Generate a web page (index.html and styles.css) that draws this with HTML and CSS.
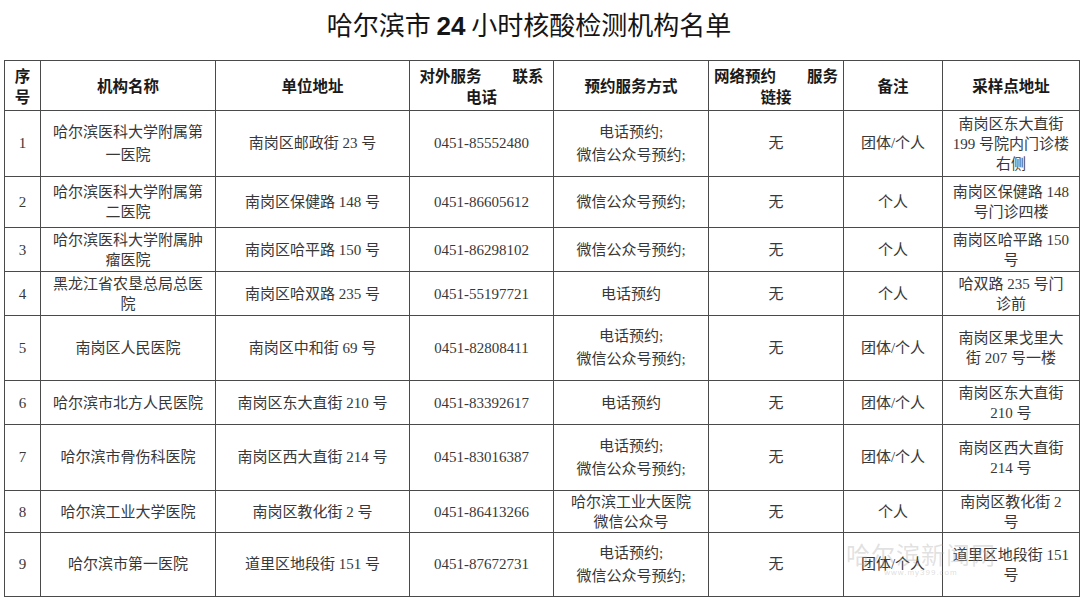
FILE: index.html
```html
<!DOCTYPE html>
<html lang="zh-CN">
<head>
<meta charset="utf-8">
<title>哈尔滨市24小时核酸检测机构名单</title>
<link rel="stylesheet" href="styles.css">
</head>
<body>
<div class="page">
  <h1 class="title">哈尔滨市 <b class="num">24</b> 小时核酸检测机构名单</h1>
  <table class="list">
    <colgroup>
      <col class="c-no"><col class="c-name"><col class="c-addr"><col class="c-tel">
      <col class="c-way"><col class="c-link"><col class="c-note"><col class="c-site">
    </colgroup>
    <thead>
      <tr class="h-head">
        <th>序<br>号</th>
        <th>机构名称</th>
        <th>单位地址</th>
        <th>对外服务　　联系<br>电话</th>
        <th>预约服务方式</th>
        <th>网络预约　　服务<br>链接</th>
        <th>备注</th>
        <th>采样点地址</th>
      </tr>
    </thead>
    <tbody>
      <tr class="h66 tall">
        <td>1</td><td>哈尔滨医科大学附属第<br>一医院</td><td>南岗区邮政街 23 号</td><td>0451-85552480</td>
        <td>电话预约;<br>微信公众号预约;</td><td>无</td><td>团体/个人</td><td class="site">南岗区东大直街<br>199 号院内门诊楼<br>右侧</td>
      </tr>
      <tr class="h51">
        <td>2</td><td>哈尔滨医科大学附属第<br>二医院</td><td>南岗区保健路 148 号</td><td>0451-86605612</td>
        <td>微信公众号预约;</td><td>无</td><td>个人</td><td class="site">南岗区保健路 148<br>号门诊四楼</td>
      </tr>
      <tr class="h44">
        <td>3</td><td>哈尔滨医科大学附属肿<br>瘤医院</td><td>南岗区哈平路 150 号</td><td>0451-86298102</td>
        <td>微信公众号预约;</td><td>无</td><td>个人</td><td class="site">南岗区哈平路 150<br>号</td>
      </tr>
      <tr class="h44">
        <td>4</td><td>黑龙江省农垦总局总医<br>院</td><td>南岗区哈双路 235 号</td><td>0451-55197721</td>
        <td>电话预约</td><td>无</td><td>个人</td><td class="site">哈双路 235 号门<br>诊前</td>
      </tr>
      <tr class="h65 tall">
        <td>5</td><td>南岗区人民医院</td><td>南岗区中和街 69 号</td><td>0451-82808411</td>
        <td>电话预约;<br>微信公众号预约;</td><td>无</td><td>团体/个人</td><td class="site">南岗区果戈里大<br>街 207 号一楼</td>
      </tr>
      <tr class="h44">
        <td>6</td><td>哈尔滨市北方人民医院</td><td>南岗区东大直街 210 号</td><td>0451-83392617</td>
        <td>电话预约</td><td>无</td><td>团体/个人</td><td class="site">南岗区东大直街<br>210 号</td>
      </tr>
      <tr class="h66 tall">
        <td>7</td><td>哈尔滨市骨伤科医院</td><td>南岗区西大直街 214 号</td><td>0451-83016387</td>
        <td>电话预约;<br>微信公众号预约;</td><td>无</td><td>团体/个人</td><td class="site">南岗区西大直街<br>214 号</td>
      </tr>
      <tr class="h42">
        <td>8</td><td>哈尔滨工业大学医院</td><td>南岗区教化街 2 号</td><td>0451-86413266</td>
        <td>哈尔滨工业大医院<br>微信公众号</td><td>无</td><td>个人</td><td class="site">南岗区教化街 2<br>号</td>
      </tr>
      <tr class="h64 tall">
        <td>9</td><td>哈尔滨市第一医院</td><td>道里区地段街 151 号</td><td>0451-87672731</td>
        <td>电话预约;<br>微信公众号预约;</td><td>无</td><td>团体/个人</td><td class="site">道里区地段街 151<br>号</td>
      </tr>
    </tbody>
  </table>
  <div class="watermark">
    <span class="wm-name">哈尔滨新闻网</span>
    <span class="wm-url">www.my399.com</span>
  </div>
</div>
</body>
</html>
```

FILE: styles.css
```css
html, body {
  margin: 0;
  padding: 0;
  background: #ffffff;
}

.page {
  position: relative;
  width: 1080px;
  height: 597px;
  overflow: hidden;
}

.title {
  margin: 0;
  padding: 6px 22px 0 0;
  height: 52px;
  box-sizing: border-box;
  line-height: 36px;
  text-align: center;
  font-family: "Noto Sans CJK SC", "Noto Sans", sans-serif;
  font-size: 26px;
  font-weight: 400;
  color: #151515;
}

.title .num {
  font-family: "Liberation Sans", "Noto Sans", sans-serif;
  font-weight: 700;
}

.list {
  margin: 8px 0 0 4px;
  width: 1075px;
  table-layout: fixed;
  border-collapse: collapse;
}

.c-no { width: 36px; }
.c-name { width: 175px; }
.c-addr { width: 194px; }
.c-tel { width: 144px; }
.c-way { width: 155px; }
.c-link { width: 135px; }
.c-note { width: 99px; }
.c-site { width: 137px; }

.list th,
.list td {
  border: 1px solid #4a4a4a;
  padding: 0 2px;
  text-align: center;
  vertical-align: middle;
  white-space: nowrap;
  overflow: hidden;
}

.list th {
  font-family: "Noto Sans CJK SC", "Noto Sans", sans-serif;
  font-size: 15.5px;
  font-weight: 700;
  line-height: 21px;
  color: #1a1a1a;
}

.list td {
  font-family: "Liberation Serif", "Noto Sans CJK SC", serif;
  font-size: 15px;
  font-weight: 400;
  line-height: 20px;
  color: #383838;
}

.list tr.tall td {
  line-height: 23px;
}

.list tr.tall td.site,
.list td.site {
  line-height: 20px;
}

.h-head { height: 50px; }
.h66 { height: 66px; }
.h65 { height: 65px; }
.h64 { height: 64px; }
.h51 { height: 51px; }
.h44 { height: 44px; }
.h42 { height: 42px; }

.watermark {
  position: absolute;
  left: 846px;
  top: 540px;
  display: flex;
  flex-direction: column;
  align-items: center;
  pointer-events: none;
}

.wm-name {
  font-family: "Noto Sans CJK SC", sans-serif;
  font-size: 24px;
  line-height: 28px;
  color: rgba(170, 170, 170, 0.35);
  letter-spacing: 1px;
}

.wm-url {
  font-family: "Liberation Sans", sans-serif;
  font-size: 8px;
  line-height: 10px;
  color: rgba(170, 170, 170, 0.4);
  letter-spacing: 1px;
}
```
